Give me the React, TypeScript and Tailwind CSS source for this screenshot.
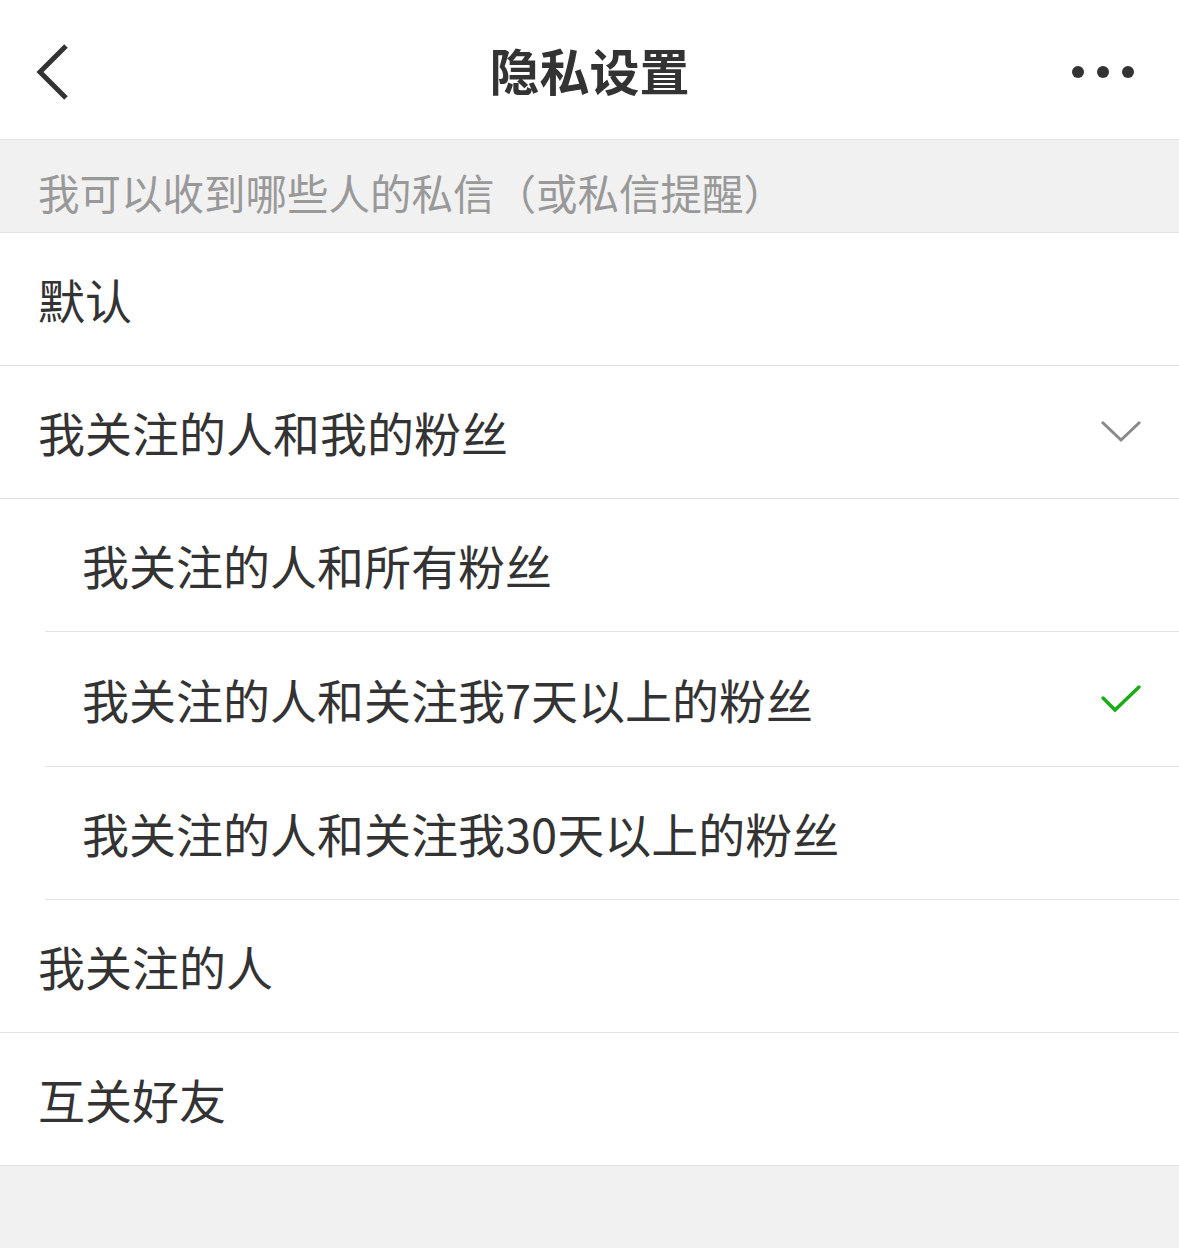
import { Check } from "lucide-react";

const font = { fontFamily: '"Noto Sans CJK SC", "Noto Sans", sans-serif' };

type Row = { label: string; sub?: boolean; mark?: "down" | "check"; h?: string };

const rows: Row[] = [
  { label: "默认" },
  { label: "我关注的人和我的粉丝", mark: "down" },
  { label: "我关注的人和所有粉丝", sub: true },
  { label: "我关注的人和关注我7天以上的粉丝", sub: true, mark: "check", h: "h-[135px]" },
  { label: "我关注的人和关注我30天以上的粉丝", sub: true },
  { label: "我关注的人" },
  { label: "互关好友" },
];

export default function App() {
  return (
    <div className="flex min-h-[1248px] w-[1179px] flex-col bg-[#f1f1f1] text-[#333]" style={font}>
      <header className="grid h-[140px] grid-cols-[1fr_auto_1fr] items-center border-b border-[#e2e2e2] bg-white px-[30px]">
        <svg width="44" height="60" viewBox="0 0 44 60" className="ml-[4px] mt-[5px]">
          <path d="M32 4 L6 30 L32 56" fill="none" stroke="#333" strokeWidth="5" />
        </svg>
        <h1 className="text-[50px] font-bold">隐私设置</h1>
        <div className="mt-[5px] flex justify-end gap-[13px] pr-[15px]">
          <span className="h-[12px] w-[12px] rounded-full bg-[#333]" />
          <span className="h-[12px] w-[12px] rounded-full bg-[#333]" />
          <span className="h-[12px] w-[12px] rounded-full bg-[#333]" />
        </div>
      </header>
      <div className="flex h-[93px] items-end border-b border-[#e2e2e2] pb-[9px] pl-[38px] text-[41.5px] text-[#999]">
        我可以收到哪些人的私信（或私信提醒）
      </div>
      <div className="bg-white">
        {rows.map((r) => (
          <div key={r.label} className={`flex ${r.h ?? "h-[133px]"} ${r.sub ? "pl-[45px]" : ""}`}>
            <div
              className={`flex flex-1 items-center justify-between border-b border-[#e2e2e2] ${r.sub ? "pl-[37px]" : "pl-[38px]"} pr-[38px]`}
            >
              <span className="text-[47px]">{r.label}</span>
              {r.mark === "down" && (
                <svg width="42" height="26" viewBox="0 0 42 26" className="mr-[-1px]">
                  <path d="M2 3 L21 21 L40 3" fill="none" stroke="#8a8a8a" strokeWidth="3" />
                </svg>
              )}
              {r.mark === "check" && (
                <svg width="42" height="32" viewBox="0 0 42 32" className="mr-[-1px]">
                  <path d="M3 15 L15 27 L39 4" fill="none" stroke="#1aad19" strokeWidth="3.5" strokeLinecap="round" />
                </svg>
              )}
            </div>
          </div>
        ))}
      </div>
    </div>
  );
}
